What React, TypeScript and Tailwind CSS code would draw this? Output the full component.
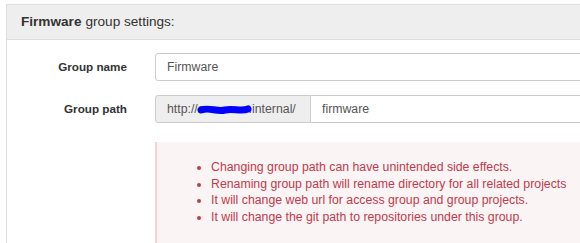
import React from "react";

const notes = [
  "Changing group path can have unintended side effects.",
  "Renaming group path will rename directory for all related projects",
  "It will change web url for access group and group projects.",
  "It will change the git path to repositories under this group.",
];

function Redaction(): JSX.Element {
  return (
    <svg className="absolute left-[41px] top-[8px]" width="56" height="12" viewBox="0 0 56 12">
      <path d="M4 6 C12 3 20 8 28 6 C36 4 44 8 51 5" stroke="#0000ff" strokeWidth="7" strokeLinecap="round" fill="none" />
    </svg>
  );
}

export default function App(): JSX.Element {
  return (
    <div
      className="h-[243px] w-[580px] overflow-hidden bg-white pl-[6px] pt-[4px] text-[12.3px] text-[#333]"
      style={{ fontFamily: '"Liberation Sans", Arial, sans-serif' }}
    >
      <div className="w-[640px] border-l border-t border-[#ddd]">
        <div className="flex h-[35px] items-center border-b border-[#ddd] bg-[#eee] px-[14px] text-[13.6px] text-[#333]">
          <span className="font-bold">Firmware</span>
          <span className="ml-[4px]">group settings:</span>
        </div>

        <div className="pt-[13px]">
          <div className="flex items-center">
            <label className="w-[148px] pr-[28px] text-right text-[11.7px] font-bold">Group name</label>
            <div className="flex h-[28px] flex-1 items-center rounded-[3px] border border-[#ccc] px-[11px] text-[#555]">
              Firmware
            </div>
          </div>

          <div className="mt-[14px] flex items-center">
            <label className="w-[148px] pr-[28px] text-right text-[11.7px] font-bold">Group path</label>
            <div className="flex h-[28px] flex-1">
              <span className="relative flex w-[156px] shrink-0 items-center whitespace-nowrap rounded-l-[3px] border border-[#ccc] bg-[#eee] pl-[11px] text-[#555]">
                http://a<span className="inline-block w-[44px]" />.internal/
                <Redaction />
              </span>
              <div className="flex flex-1 items-center border-y border-r border-[#ccc] px-[11px] text-[#555]">
                firmware
              </div>
            </div>
          </div>

          <div className="mt-[19px] flex">
            <div className="w-[148px] shrink-0" />
            <div className="flex-1 border-l-2 border-[#f2d3d8] bg-[#fbf4f5] px-[14px] pb-[20px] pt-[17px] text-[#c23b4b]">
              <ul className="list-disc pl-[40px] leading-[16.7px] marker:text-[#c23b4b]">
                {notes.map((note) => (
                  <li key={note}>{note}</li>
                ))}
              </ul>
            </div>
          </div>
        </div>
      </div>
    </div>
  );
}
